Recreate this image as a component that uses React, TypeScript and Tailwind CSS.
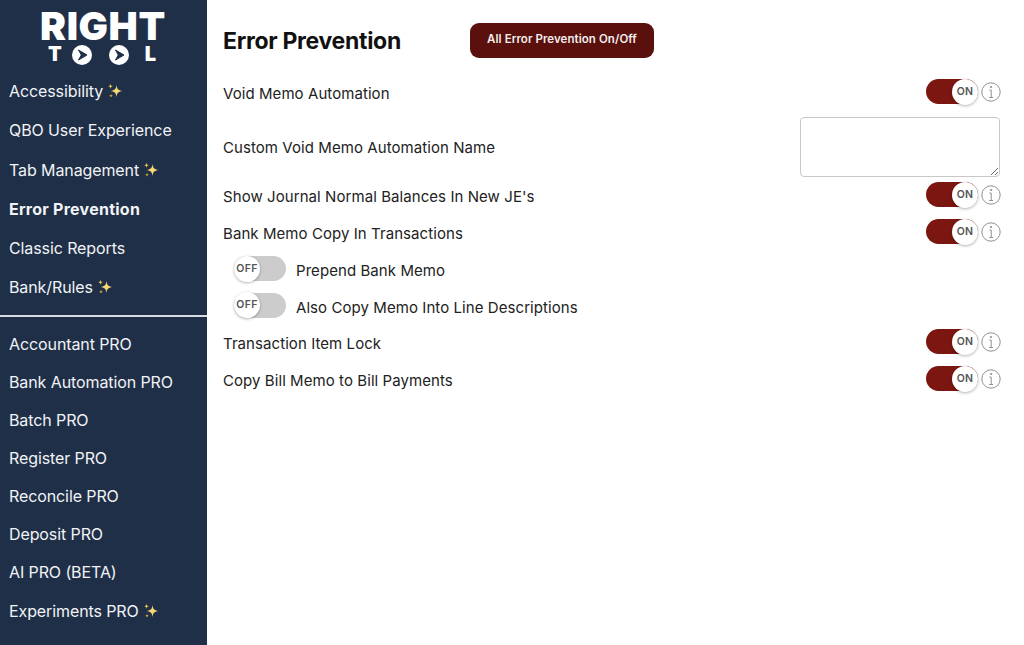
function Sparkles() {
  return (
    <svg width="16" height="16" viewBox="0 0 16 16" className="ml-[4px] inline-block shrink-0">
      <path d="M9.5 2 C10 6 11 7.2 15.5 8 C11 8.8 10 10 9.5 14 C9 10 8 8.8 3.5 8 C8 7.2 9 6 9.5 2Z" fill="#f7d774" />
      <path d="M3.5 .5 C3.7 2.4 4.2 3 6 3.3 C4.2 3.6 3.7 4.2 3.5 6 C3.3 4.2 2.8 3.6 1 3.3 C2.8 3 3.3 2.4 3.5 .5Z" fill="#f3c94f" />
      <path d="M4 10.5 C4.1 12 4.6 12.6 6 12.8 C4.6 13 4.1 13.6 4 15 C3.9 13.6 3.4 13 2 12.8 C3.4 12.6 3.9 12 4 10.5Z" fill="#e2b23c" />
    </svg>
  );
}

function Arrow() {
  return (
    <svg width="20" height="20" viewBox="0 0 20 20">
      <circle cx="10" cy="10" r="10" fill="white" />
      <path d="M6.5 5 L15 10 L6.5 15 L9.3 10 Z" fill="#1f2f47" stroke="#1f2f47" strokeWidth="1" strokeLinejoin="round" />
    </svg>
  );
}

function Logo() {
  return (
    <div className="flex h-[69px] flex-col text-white">
      <div className="h-[37px] pl-[40px] text-[39px] leading-[37px] font-black tracking-[0.6px]">RIGHT</div>
      <div className="flex items-center pl-[48px] text-[20px] leading-[21px] font-black">
        <span className="mr-[10px]">T</span>
        <span className="mr-[17px]"><Arrow /></span>
        <span className="mr-[16px]"><Arrow /></span>
        <span>L</span>
      </div>
    </div>
  );
}

function NavItem({ label, spark, bold, h }: { label: string; spark?: boolean; bold?: boolean; h: string }) {
  return (
    <div className={`flex items-center pl-[9px] text-[16px] text-[#f1f3f6] ${h} ${bold ? "font-bold tracking-[0.25px]" : "tracking-[-0.1px]"}`}>
      {label}
      {spark && <Sparkles />}
    </div>
  );
}

function Toggle({ on }: { on: boolean }) {
  return (
    <div className={`mb-[6px] flex h-[25px] w-[52px] items-center rounded-full ${on ? "justify-end bg-[#7b1610]" : "justify-start bg-[#cccccc]"}`}>
      <div className="flex h-[26px] w-[26px] items-center justify-center rounded-full bg-white text-[10.5px] font-semibold tracking-[0.3px] text-[#555] shadow-[0_1px_3px_rgba(0,0,0,0.3)]">
        {on ? "ON" : "OFF"}
      </div>
    </div>
  );
}

function Info() {
  return (
    <svg width="20" height="20" viewBox="0 0 20 20" fill="none" stroke="#8f8f8f" className="mr-[-1px] mb-[6px] ml-[3px]">
      <circle cx="10" cy="10" r="9.2" strokeWidth="1" />
      <circle cx="10" cy="5" r="1.1" fill="#8f8f8f" stroke="none" />
      <path d="M8.4 8 H10.2 V15.2 M8.2 15.5 H12" strokeWidth="1" />
    </svg>
  );
}

function Row({ label, h }: { label: string; h: string }) {
  return (
    <div className={`flex items-center justify-between ${h}`}>
      <span>{label}</span>
      <div className="flex items-center">
        <Toggle on />
        <Info />
      </div>
    </div>
  );
}

function SubRow({ label, h }: { label: string; h: string }) {
  return (
    <div className={`flex items-center pl-[11px] ${h}`}>
      <Toggle on={false} />
      <span className="ml-[10px]">{label}</span>
    </div>
  );
}

export default function App() {
  return (
    <div className="flex h-[645px] w-[1024px] overflow-hidden bg-white [font-family:Inter,sans-serif]">
      <aside className="w-[207px] shrink-0 bg-[#1f2f47] pt-[7px]">
        <Logo />
        <NavItem label="Accessibility" spark h="h-[39px] -mt-[5px]" />
        <NavItem label="QBO User Experience" h="h-[40px]" />
        <NavItem label="Tab Management" spark h="h-[39px]" />
        <NavItem label="Error Prevention" bold h="h-[39px]" />
        <NavItem label="Classic Reports" h="h-[39px]" />
        <NavItem label="Bank/Rules" spark h="h-[39px]" />
        <div className="mt-[9px] mb-[8px] h-[2px] bg-[#d8dbe0]" />
        <NavItem label="Accountant PRO" h="h-[38px]" />
        <NavItem label="Bank Automation PRO" h="h-[38px]" />
        <NavItem label="Batch PRO" h="h-[38px]" />
        <NavItem label="Register PRO" h="h-[38px]" />
        <NavItem label="Reconcile PRO" h="h-[38px]" />
        <NavItem label="Deposit PRO" h="h-[38px]" />
        <NavItem label="AI PRO (BETA)" h="h-[38px]" />
        <NavItem label="Experiments PRO" spark h="h-[39px]" />
      </aside>
      <main className="flex-1 pr-6 pl-[16px] text-[15px] tracking-[0.07px] text-[#222]">
        <div className="flex h-[76px] items-center pt-[8px]">
          <h1 className="mb-[2px] w-[247px] text-[23px] font-bold tracking-[-0.3px] text-[#111]">Error Prevention</h1>
          <button className="mb-[4px] h-[35px] w-[184px] rounded-[9px] bg-[#5a100c] text-[11.5px] font-semibold text-[#f4eeee]">
            All Error Prevention On/Off
          </button>
        </div>
        <Row label="Void Memo Automation" h="h-[37px]" />
        <div className="mt-[4px] flex h-[60px] items-center justify-between">
          <span className="pt-[2px]">Custom Void Memo Automation Name</span>
          <textarea className="h-[60px] w-[200px] rounded-[4px] border border-[#c8c8c8] bg-white" />
        </div>
        <Row label="Show Journal Normal Balances In New JE's" h="h-[37px] mt-[2px]" />
        <Row label="Bank Memo Copy In Transactions" h="h-[37px]" />
        <SubRow label="Prepend Bank Memo" h="h-[37px]" />
        <SubRow label="Also Copy Memo Into Line Descriptions" h="h-[36px]" />
        <Row label="Transaction Item Lock" h="h-[37px]" />
        <Row label="Copy Bill Memo to Bill Payments" h="h-[37px]" />
      </main>
    </div>
  );
}
